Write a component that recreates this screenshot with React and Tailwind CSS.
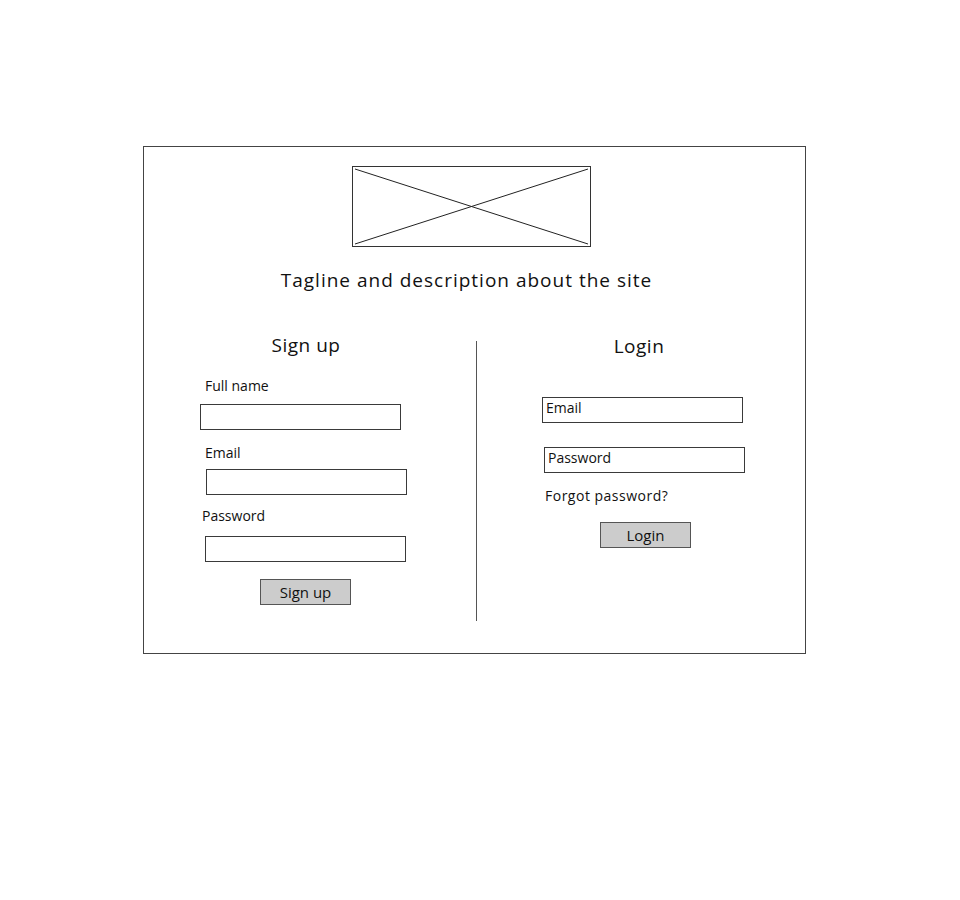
import React from 'react';

const font = { fontFamily: '"Open Sans", "Liberation Sans", sans-serif' };

function Field({ className = '', children }) {
  return (
    <div className={`h-[26px] w-[201px] border border-[#3a3a3a] bg-white px-[3px] text-[14px] leading-[20px] text-[#111] ${className}`}>
      {children}
    </div>
  );
}

function Btn({ className = '', children }) {
  return (
    <div className={`flex h-[26px] w-[91px] items-center justify-center border border-[#555] bg-[#cccccc] text-[15px] text-[#111] ${className}`}>
      {children}
    </div>
  );
}

export default function App() {
  return (
    <div className="min-h-[900px] w-[960px] bg-white pt-[146px] text-[#111]" style={font}>
      <div className="ml-[143px] flex h-[508px] w-[663px] flex-col border border-[#444]">
        {/* logo placeholder */}
        <div className="ml-[208px] mt-[19px] h-[81px] w-[239px] border border-[#333]">
          <svg viewBox="0 0 237 79" className="h-full w-full" preserveAspectRatio="none">
            <line x1="2" y1="2" x2="235" y2="77" stroke="#222" strokeWidth="1" />
            <line x1="235" y1="2" x2="2" y2="77" stroke="#222" strokeWidth="1" />
          </svg>
        </div>

        <p className="mt-[19px] pr-[16px] text-center text-[19px] leading-[28px] tracking-[1px]">
          Tagline and description about the site
        </p>

        <div className="mt-[37px] flex">
          {/* sign up */}
          <div className="flex w-[332px] flex-col">
            <h2 className="pr-[8px] text-center text-[19px] leading-[28px] tracking-[0.5px]">Sign up</h2>
            <label className="ml-[61px] mt-[17px] text-[14px] leading-[20px]">Full name</label>
            <Field className="ml-[56px] mt-[8px]" />
            <label className="ml-[61px] mt-[13px] text-[14px] leading-[20px]">Email</label>
            <Field className="ml-[62px] mt-[6px]" />
            <label className="ml-[58px] mt-[11px] text-[14px] leading-[20px]">Password</label>
            <Field className="ml-[61px] mt-[10px]" />
            <Btn className="ml-[116px] mt-[17px]">Sign up</Btn>
          </div>

          <div className="mt-[10px] h-[280px] w-px bg-[#555]" />

          {/* login */}
          <div className="flex flex-1 flex-col">
            <h2 className="mt-[1px] pr-[4px] text-center text-[19px] leading-[28px] tracking-[0.5px]">Login</h2>
            <Field className="ml-[65px] mt-[37px] h-[25px]">Email</Field>
            <Field className="ml-[67px] mt-[24px] h-[25px]">Password</Field>
            <p className="ml-[68px] mt-[13px] text-[14px] leading-[20px] tracking-[0.5px]">Forgot password?</p>
            <Btn className="ml-[123px] mt-[16px]">Login</Btn>
          </div>
        </div>
      </div>
    </div>
  );
}
